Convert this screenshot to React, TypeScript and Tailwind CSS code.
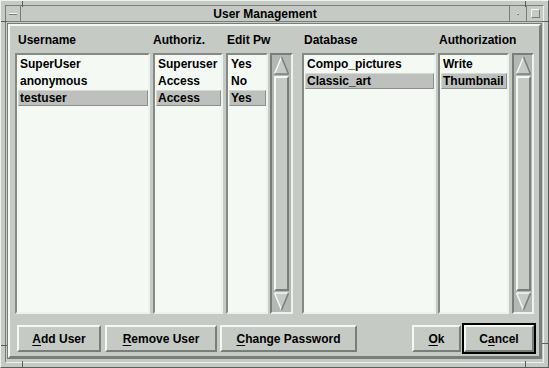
import React from 'react';

const users: [string, string, string][] = [
  ['SuperUser', 'Superuser', 'Yes'],
  ['anonymous', 'Access', 'No'],
  ['testuser', 'Access', 'Yes'],
];
const dbs: [string, string][] = [
  ['Compo_pictures', 'Write'],
  ['Classic_art', 'Thumbnail'],
];

function ListBox({ items, selected, w }: { items: string[]; selected: number; w: string }) {
  return (
    <div className={`${w} h-[261px] bg-[#f4f9f4] border-2 border-t-[#868a86] border-l-[#868a86] border-r-[#eef2ee] border-b-[#eef2ee] pl-[1px] overflow-hidden`}>
      {items.map((t, i) => (
        <div key={i} className="h-[17px] pt-[1px]">
          <div
            className={
              i === selected
                ? 'h-[16px] leading-[14px] pl-[1px] bg-[#bdc0bd] border border-t-[#d6d9d6] border-l-[#d6d9d6] border-r-[#8c8f8c] border-b-[#8c8f8c] whitespace-nowrap'
                : 'h-[16px] leading-[14px] pl-[1px] border border-transparent whitespace-nowrap'
            }
          >
            {t}
          </div>
        </div>
      ))}
    </div>
  );
}

function UpArrow() {
  return (
    <svg width="15" height="19" viewBox="0 0 15 19" className="block">
      <polygon points="7.5,1 0.5,18 14.5,18" fill="#c5cac5" />
      <line x1="7.5" y1="1" x2="0.5" y2="18" stroke="#f4f8f4" strokeWidth="1.5" />
      <line x1="7.5" y1="1" x2="14.5" y2="18" stroke="#7a7e7a" strokeWidth="1.5" />
      <line x1="0.5" y1="18" x2="14.5" y2="18" stroke="#7a7e7a" strokeWidth="1.5" />
    </svg>
  );
}

function DownArrow() {
  return (
    <svg width="15" height="19" viewBox="0 0 15 19" className="block">
      <polygon points="0.5,1 14.5,1 7.5,18" fill="#c5cac5" />
      <line x1="0.5" y1="1" x2="14.5" y2="1" stroke="#f4f8f4" strokeWidth="1.5" />
      <line x1="0.5" y1="1" x2="7.5" y2="18" stroke="#f4f8f4" strokeWidth="1.5" />
      <line x1="14.5" y1="1" x2="7.5" y2="18" stroke="#7a7e7a" strokeWidth="1.5" />
    </svg>
  );
}

function ScrollBar({ w }: { w: string }) {
  return (
    <div className={`${w} h-[261px] bg-[#b4b8b4] border-2 border-t-[#7a7e7a] border-l-[#7a7e7a] border-r-[#eef2ee] border-b-[#eef2ee] flex flex-col items-center py-[1px]`}>
      <UpArrow />
      <div className="w-[15px] flex-1 my-[1px] bg-[#c5cac5] border-2 border-t-[#f4f8f4] border-l-[#f4f8f4] border-r-[#7a7e7a] border-b-[#7a7e7a]" />
      <DownArrow />
    </div>
  );
}

function Btn({ w, children }: { w: string; children: React.ReactNode }) {
  return (
    <div className={`${w} h-[27px] flex items-center justify-center bg-[#c5cac5] border-2 border-t-[#f4f8f4] border-l-[#f4f8f4] border-r-[#7a7e7a] border-b-[#7a7e7a] whitespace-nowrap`}>
      {children}
    </div>
  );
}

function U({ children }: { children: React.ReactNode }) {
  return <span className="underline underline-offset-[2px] decoration-[1px]">{children}</span>;
}

export default function App() {
  return (
    <div className="relative w-[549px] h-[368px] bg-[#c5cac5] border border-t-[#eef2ee] border-l-[#eef2ee] border-r-[#5a5e5a] border-b-[#5a5e5a] p-[4px] font-['Liberation_Sans',Arial,sans-serif] font-bold text-[12px] text-black overflow-hidden">
      <div className="h-full flex flex-col border border-t-[#7a7e7a] border-l-[#7a7e7a] border-r-[#eef2ee] border-b-[#eef2ee]">
        {/* title bar */}
        <div className="h-[16px] flex border-b border-b-[#7a7e7a]">
          <div className="w-[15px] border-r border-r-[#7a7e7a] flex items-center justify-center">
            <div className="w-[8px] h-[2px] border-t border-t-[#f4f8f4] border-b border-b-[#7a7e7a]" />
          </div>
          <div className="flex-1 flex items-center justify-center leading-[14px]">User Management</div>
          <div className="w-[17px] border-l border-l-[#7a7e7a] flex items-center justify-center">
            <div className="w-[2px] h-[2px] border-t border-t-[#f4f8f4] border-r border-r-[#7a7e7a] bg-[#7a7e7a]" />
          </div>
          <div className="w-[17px] border-l border-l-[#7a7e7a] flex items-center justify-center">
            <div className="w-[9px] h-[9px] border border-t-[#f4f8f4] border-l-[#f4f8f4] border-r-[#7a7e7a] border-b-[#7a7e7a]" />
          </div>
        </div>
        {/* client */}
        <div className="flex-1 mt-[1px] mx-[1px] mb-[3px] border border-[#7a7e7a]">
          <div className="h-full bg-[#c5cac5] border-2 border-t-[#f4f8f4] border-l-[#f4f8f4] border-r-[#7a7e7a] border-b-[#7a7e7a] flex flex-col pt-[7px] pl-[5px]">
            <div className="flex h-[14px] leading-[14px] mb-[6px] whitespace-nowrap">
              <div className="w-[135px] pl-[3px]">Username</div>
              <div className="w-[70px] ml-[3px]">Authoriz.</div>
              <div className="w-[42px] ml-[3px] pl-[1px]">Edit Pw</div>
              <div className="w-[23px] ml-[2px]" />
              <div className="w-[134px] ml-[9px] pl-[2px]">Database</div>
              <div className="w-[71px] ml-[2px] pl-[1px]">Authorization</div>
            </div>
            <div className="flex">
              <ListBox w="w-[135px]" items={users.map((u) => u[0])} selected={2} />
              <div className="ml-[3px]">
                <ListBox w="w-[70px]" items={users.map((u) => u[1])} selected={2} />
              </div>
              <div className="ml-[3px]">
                <ListBox w="w-[42px]" items={users.map((u) => u[2])} selected={2} />
              </div>
              <div className="ml-[2px]">
                <ScrollBar w="w-[23px]" />
              </div>
              <div className="ml-[9px]">
                <ListBox w="w-[134px]" items={dbs.map((d) => d[0])} selected={1} />
              </div>
              <div className="ml-[2px]">
                <ListBox w="w-[71px]" items={dbs.map((d) => d[1])} selected={1} />
              </div>
              <div className="ml-[3px]">
                <ScrollBar w="w-[22px]" />
              </div>
            </div>
            <div className="flex items-center h-[31px] mt-[9px] pl-[2px] pr-[3px]">
              <Btn w="w-[84px]">
                <U>A</U>dd User
              </Btn>
              <div className="ml-[4px]">
                <Btn w="w-[112px]">
                  <U>R</U>emove User
                </Btn>
              </div>
              <div className="ml-[3px]">
                <Btn w="w-[137px]">
                  <U>C</U>hange Password
                </Btn>
              </div>
              <div className="ml-auto">
                <Btn w="w-[49px]">
                  <U>O</U>k
                </Btn>
              </div>
              <div className="ml-[1px] w-[74px] h-[31px] border-2 border-black">
                <Btn w="w-full">
                  C<U>a</U>ncel
                </Btn>
              </div>
            </div>
          </div>
        </div>
      </div>
      {/* frame corner resize marks */}
      <div className="absolute left-[21px] top-[-1px] w-[1px] h-[7px] bg-[#5a5e5a]" />
      <div className="absolute left-[-1px] top-[20px] w-[7px] h-[1px] bg-[#5a5e5a]" />
      <div className="absolute left-[524px] top-[-1px] w-[1px] h-[7px] bg-[#5a5e5a]" />
      <div className="absolute left-[541px] top-[20px] w-[7px] h-[1px] bg-[#5a5e5a]" />
      <div className="absolute left-[-1px] top-[344px] w-[7px] h-[1px] bg-[#5a5e5a]" />
      <div className="absolute left-[21px] top-[360px] w-[1px] h-[7px] bg-[#5a5e5a]" />
      <div className="absolute left-[541px] top-[342px] w-[7px] h-[1px] bg-[#5a5e5a]" />
      <div className="absolute left-[524px] top-[360px] w-[1px] h-[7px] bg-[#5a5e5a]" />
    </div>
  );
}
